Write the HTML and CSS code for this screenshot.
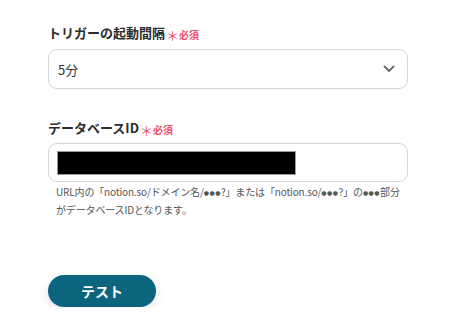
FILE: index.html
```html
<!DOCTYPE html>
<html>
  <head>
    <title>トリガー設定</title>
    <link rel="stylesheet" href="styles.css">
  </head>
  <body>
    <div class="form">
      <div class="field">
        <div class="label">
          <span class="label-text">トリガーの起動間隔</span>
          <span class="required"><span class="mark">＊</span>必須</span>
        </div>
        <div class="select">
          <span class="select-value">5分</span>
          <svg class="chevron" width="12" height="8" viewBox="0 0 12 8">
            <path d="M1.5 1.5 L6 6 L10.5 1.5" fill="none" stroke="#6b6b6b" stroke-width="1.8" stroke-linecap="round" stroke-linejoin="round"/>
          </svg>
        </div>
      </div>

      <div class="field field-db">
        <div class="label">
          <span class="label-text">データベースID</span>
          <span class="required"><span class="mark">＊</span>必須</span>
        </div>
        <div class="input">
          <div class="redacted"></div>
        </div>
        <div class="help">
          URL内の「notion.so/ドメイン名/<span class="dots">●●●</span>?」または「notion.so/<span class="dots">●●●</span>?」の<span class="dots">●●●</span>部分<br>がデータベースIDとなります。
        </div>
      </div>

      <button class="test-btn">テスト</button>
    </div>
  </body>
</html>
```

FILE: styles.css
```css
body {
  margin: 0;
  padding: 0;
  background-color: #fff;
  font-family: "Noto Sans CJK JP", "Noto Sans", sans-serif;
  color: #333;
}

.form {
  padding: 22px 0 0 48px;
  width: 360px;
}

.label {
  display: flex;
  align-items: center;
  height: 20px;
  margin-bottom: 7px;
}

.label-text {
  font-size: 13px;
  font-weight: bold;
  color: #2b2b2b;
}

.required {
  display: flex;
  align-items: center;
  margin-left: 1px;
  margin-top: 5px;
  font-size: 10px;
  font-weight: bold;
  color: #ee4d6a;
}

.required .mark {
  font-size: 13px;
  font-weight: normal;
  margin-right: 0;
  margin-top: 2px;
}

.select {
  display: flex;
  align-items: center;
  justify-content: space-between;
  height: 38px;
  border: 1px solid #d3d6db;
  border-radius: 9px;
  padding: 0 12px 0 9px;
}

.select-value {
  font-size: 13px;
  color: #333;
}

.field-db {
  margin-top: 28px;
}

.field-db .label {
  margin-bottom: 6px;
}

.input {
  display: flex;
  align-items: center;
  height: 37px;
  border: 1px solid #d3d6db;
  border-radius: 9px;
  padding: 0 8px;
}

.redacted {
  width: 237px;
  height: 22px;
  background-color: #000;
  border: 1px solid #9a9a9a;
}

.help {
  margin-top: 1px;
  padding-left: 8px;
  font-size: 10px;
  letter-spacing: -0.15px;
  line-height: 17px;
  color: #555;
  white-space: nowrap;
}

.help .dots {
  font-family: "DejaVu Sans", sans-serif;
  font-size: 6px;
  letter-spacing: 0.5px;
  vertical-align: 1px;
}

.test-btn {
  display: block;
  margin-top: 57px;
  width: 108px;
  height: 32px;
  border: none;
  border-radius: 16px;
  background-color: #0b657e;
  color: #fff;
  font-family: "Noto Sans CJK JP", "Noto Sans", sans-serif;
  font-size: 14px;
  font-weight: bold;
  cursor: pointer;
  box-shadow: 0 3px 10px rgba(0, 0, 0, 0.12);
}
```
